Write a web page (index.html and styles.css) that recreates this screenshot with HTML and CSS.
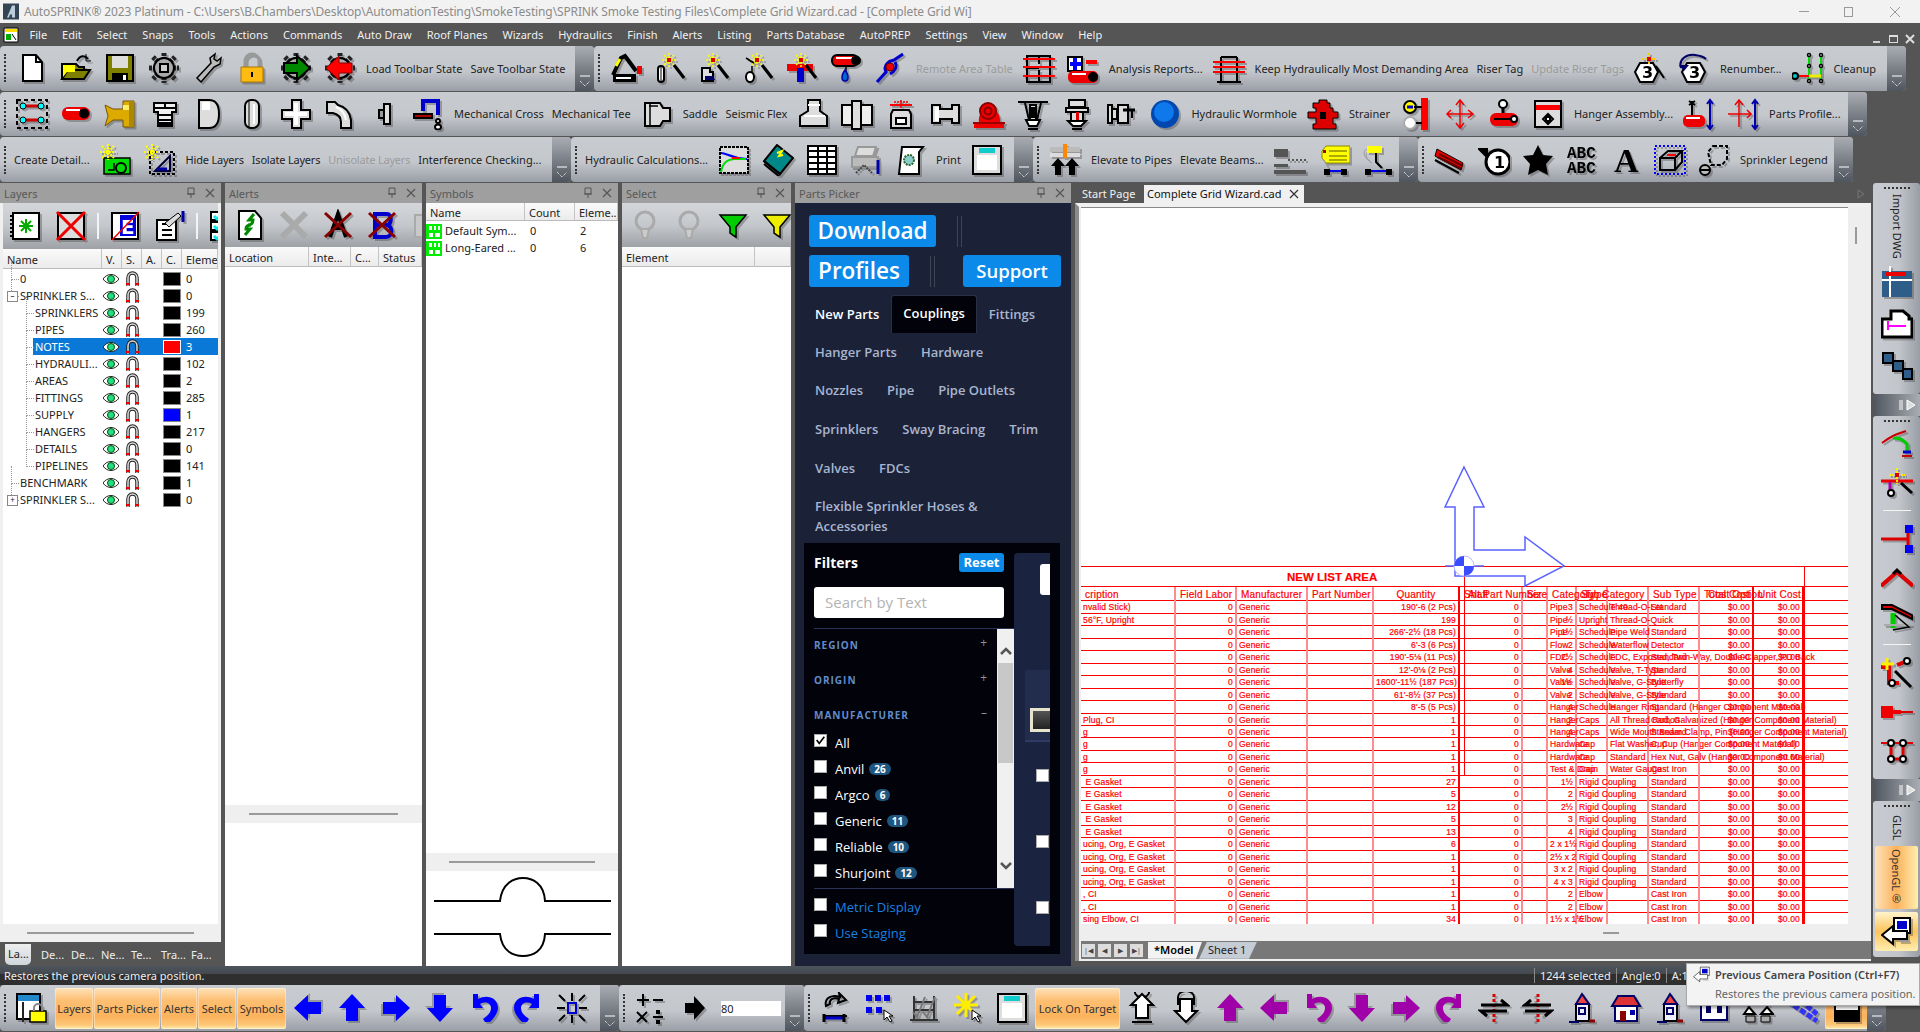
FILE: index.html
```html
<!doctype html>
<html lang="en">

<head>
  <meta charset="UTF-8">
  <title>AutoSPRINK 2023 Platinum</title>
  <link rel="stylesheet" href="styles.css">
</head>

<body>
  <svg class="sprite">
    <defs>
      <symbol id="doc" viewBox="0 0 32 32"><path d="M7 3h13l6 7v19H7z" fill="#fff"/><path d="M20 3v7h6"/></symbol>
      <symbol id="open" viewBox="0 0 32 32"><path d="M2 27V12h14l3 3h5v3H8L2 27h22l6-9H8" fill="#808000"/><path d="M3 13h12v7H7l-4 5z" fill="#ff0" stroke="none"/><path d="M17 9c3-6 8-6 11-2" /><path d="M26 2v7h5" stroke-width="1"/></symbol>
      <symbol id="save" viewBox="0 0 32 32"><path d="M3 3h26v26H3z" fill="#808000"/><path d="M8 4h16v12H8z" fill="#ddd" stroke="none"/><path d="M8 21h16v8H8z" fill="#000" stroke="none"/><path d="M19 23h3v5h-3z" fill="#fff" stroke="none"/></symbol>
      <symbol id="gear" viewBox="0 0 32 32"><path d="M16 1v30M1 16h30M5 5l22 22M27 5 5 27" stroke="#222" stroke-width="5" stroke-dasharray="3 1"/><circle cx="16" cy="16" r="10" fill="#aaa"/><path d="M12 12h8v8h-8z" fill="#ccc"/></symbol>
      <symbol id="wrench" viewBox="0 0 32 32"><path d="M5 26 19 11l-1-5 5-4-1 5 3 2 4-3-1 6-6 3L9 30z" fill="#bbb" stroke-width="1.5"/></symbol>
      <symbol id="lock" viewBox="0 0 32 32"><path d="M9 15V9a7 7 0 0 1 14 0v6" stroke="#999" stroke-width="3"/><path d="M5 15h22v15H5z" fill="#fb1" stroke="#a70" stroke-width="1"/><path d="M15 20h2v5h-2z" fill="#000" stroke="none"/></symbol>
      <symbol id="gearg" viewBox="0 0 32 32"><use href="#gear"/><path d="M4 11h13V4l13 12-13 12v-7H4z" fill="#080"/></symbol>
      <symbol id="gearr" viewBox="0 0 32 32"><use href="#gear"/><path d="M28 11H15V4L2 16l13 12v-7h13z" fill="#f00" stroke="#800" stroke-width="1"/></symbol>
      <symbol id="excav" viewBox="0 0 32 32"><path d="M3 23 11 6l4-2 11 15" stroke-width="4"/><path d="M3 22h23v8H3z" fill="#000" stroke="none"/><path d="M6 25h15v2H6z" fill="#fff" stroke="none"/><path d="M6 14l4-7" stroke="#ff0" stroke-width="3"/><path d="M27 14h5v8h-5z" fill="#e00" stroke="none"/></symbol>
      <symbol id="spark" viewBox="0 0 32 32"><path d="M15 1v14M8 8h14M10 3l10 10M20 3 10 13" stroke="#ff0" stroke-width="1.5" stroke-dasharray="2 1"/><path d="M13 6h4v4h-4z" fill="#d00" stroke="none"/><path d="M20 13 30 26" stroke-width="3"/></symbol>
      <symbol id="wcap" viewBox="0 0 32 32"><use href="#spark"/><rect x="4" y="14" width="6" height="16" rx="3" fill="#fff"/><path d="M7 15v14" stroke-width="1"/></symbol>
      <symbol id="wvalve" viewBox="0 0 32 32"><use href="#spark"/><path d="M4 16h8v4h3v9H4z" fill="#ddd"/><path d="M7 24h8l2 4H7z" fill="#006" stroke="none"/></symbol>
      <symbol id="whead" viewBox="0 0 32 32"><use href="#spark"/><path d="M4 6l8 5M10 14v6" stroke-width="1.5"/><ellipse cx="8" cy="25" rx="4" ry="5" fill="#fff"/></symbol>
      <symbol id="wtee" viewBox="0 0 32 32"><path d="M1 12h26v7H1z" fill="#e00" stroke="none"/><path d="M11 16h7v14h-7z" fill="#00c" stroke="none"/><use href="#spark"/></symbol>
      <symbol id="pipedrop" viewBox="0 0 32 32"><rect x="2" y="3" width="26" height="11" rx="5" fill="#e00"/><path d="M6 5h16v2H6z" fill="#fff" stroke="none"/><circle cx="26" cy="8.500" r="4" fill="#000"/><path d="M16 15v5" stroke-width="1.5"/><path d="M15 18c-5 7-3 11 0 11s5-4 0-11z" fill="#06c" stroke="#00a" stroke-width="1.5"/></symbol>
      <symbol id="bluehang" viewBox="0 0 32 32"><path d="M3 30 12 20c-3-6 2-11 8-12l9-6" stroke="#00c" stroke-width="3"/><path d="M21 10c3 5-1 10-5 12" stroke="#00c" stroke-width="3"/><circle cx="16" cy="15" r="4" fill="#e00" stroke="#600" stroke-width="1"/></symbol>
      <symbol id="redtable" viewBox="0 0 32 32"><path d="M4 4h23v26H4zM4 16h12M16 4v8M16 18v12" /><path d="M0 7h32M0 15h32M0 24h32" stroke="#f00" stroke-width="2"/></symbol>
      <symbol id="pluspipe" viewBox="0 0 32 32"><path d="M1 5h14v14H1z" fill="#fff"/><path d="M8 6v12M3 12h11" stroke="#00f" stroke-width="4"/><path d="M19 8h11v4H19z" fill="#f00" stroke="none"/><rect x="1" y="19" width="30" height="12" rx="5" fill="#e00" stroke="none"/><circle cx="26" cy="25" r="5" fill="#000" stroke="none"/><path d="M5 21h14v2H5z" fill="#fff" stroke="none"/></symbol>
      <symbol id="rack" viewBox="0 0 32 32"><path d="M8 5v24M24 5v24M4 30h24M8 5h16"/><path d="M0 10h32M0 15h32M0 20h32" stroke="#f00" stroke-width="2"/></symbol>
      <symbol id="wand3" viewBox="0 0 32 32"><path d="M6 11h13l5 9-5 10H6l-5-10z" fill="#fff"/><text x="8" y="26" class="num">3</text><path d="M15 1v12M8 7h14" stroke="#fc0" stroke-width="2" stroke-dasharray="2 1"/><path d="M13 5h4v4h-4z" fill="#d00" stroke="none"/><path d="M22 14 30 26" stroke-width="2"/></symbol>
      <symbol id="renum3" viewBox="0 0 32 32"><path d="M9 11h13l5 9-5 10H9l-5-10z" fill="#fff"/><text x="11" y="26" class="num">3</text><path d="M3 16C0 7 9 2 17 3s11 4 11 4" stroke="#006" stroke-width="2"/><path d="M1 13h10l-5 6z" fill="#006" stroke="none"/></symbol>
      <symbol id="clean" viewBox="0 0 32 32"><path d="M17 2v26M29 2v26" stroke="#0d0" stroke-width="2"/><path d="M3 24h14" stroke="#f00" stroke-width="2"/><path d="M17 24h12" stroke="#ee0" stroke-width="3"/><circle cx="3" cy="24" r="3" fill="#0cc"/><g fill="#fff" stroke-width="1.5"><circle cx="17" cy="3" r="1.500"/><circle cx="29" cy="3" r="1.500"/><circle cx="17" cy="14" r="1.500"/><circle cx="29" cy="14" r="1.500"/><circle cx="17" cy="29" r="1.500"/><circle cx="29" cy="29" r="1.500"/></g></symbol>
      <symbol id="area" viewBox="0 0 32 32"><path d="M1 2h30v28H1z" stroke-dasharray="4 3"/><path d="M6 8h20M6 22h20" stroke="#c00" stroke-width="3"/><circle cx="7" cy="8" r="3" fill="#0ff" stroke-width="1"/><circle cx="25" cy="8" r="3" fill="#0ff" stroke-width="1"/><circle cx="7" cy="22" r="3" fill="#0ff" stroke-width="1"/><circle cx="25" cy="22" r="3" fill="#0ff" stroke-width="1"/></symbol>
      <symbol id="pipe" viewBox="0 0 32 32"><rect x="2" y="9" width="28" height="13" rx="6" fill="#e00" stroke="none"/><circle cx="24" cy="15.500" r="5" fill="#000" stroke="none"/><path d="M6 11h14v2H6z" fill="#fff" stroke="none"/></symbol>
      <symbol id="yfit" viewBox="0 0 32 32"><path d="M1 7l8 4h10V3h11v26H19v-7H9l-8 6 3-10z" fill="#da0" stroke="#750" stroke-width="1"/><path d="M19 7h11v5H19z" fill="#fe6" stroke="none"/><path d="M25 3h5v26h-5z" fill="#a80" stroke="none"/></symbol>
      <symbol id="cap" viewBox="0 0 32 32"><path d="M6 5h22v9h-4v14H10V14H6z" fill="#eee"/><path d="M6 10h22M10 17h14M10 22h14M17 5v5" /><path d="M11 24h12v4H11z" fill="#000" stroke="none"/></symbol>
      <symbol id="endc" viewBox="0 0 32 32"><path d="M7 2h10c8 0 10 6 10 14s-2 14-10 14H7z" fill="#ddd"/><path d="M10 4h8v8h-8z" fill="#fff" stroke="none"/></symbol>
      <symbol id="disc" viewBox="0 0 32 32"><rect x="9" y="2" width="14" height="28" rx="6" fill="#ddd"/><path d="M13 3v26" stroke-width="1"/><path d="M18 6v20" stroke="#fff"/></symbol>
      <symbol id="cross" viewBox="0 0 32 32"><path d="M12 2h9v10h9v9H21v9h-9V21H2v-9h10z" fill="#ddd"/><path d="M14 5h4v22h-4zM5 14h22v4H5z" fill="#fff" stroke="none"/></symbol>
      <symbol id="elbow" viewBox="0 0 32 32"><path d="M3 4h8l3 3c8 2 12 8 13 15v8H17v-6c0-5-4-8-8-9H3z" fill="#ddd"/><path d="M12 9c5 2 9 6 10 13" stroke="#fff"/></symbol>
      <symbol id="flange" viewBox="0 0 32 32"><path d="M16 6h6v20h-6z" fill="#ddd"/><path d="M11 12h5v8h-5z" fill="#999"/></symbol>
      <symbol id="hang" viewBox="0 0 32 32"><path d="M11 13V3h15v14" stroke="#00c" stroke-width="4"/><path d="M2 16h18v4H2z" fill="#a00"/><circle cx="26" cy="23" r="2" fill="#fff"/><ellipse cx="26" cy="29" rx="3" ry="2.500" fill="#fff"/></symbol>
      <symbol id="reducer" viewBox="0 0 32 32"><path d="M4 5h15l3 5h7v13h-7l-3 5H4z" fill="#ddd"/><path d="M9 5v23M8 8h9" stroke-width="1.500"/></symbol>
      <symbol id="tee" viewBox="0 0 32 32"><path d="M11 2h12v11l7 5v10H3V18l8-5z" fill="#ddd"/><path d="M7 18h21M11 7h12" stroke="#fff"/></symbol>
      <symbol id="coupling" viewBox="0 0 32 32"><path d="M1 7h30v20H1z" fill="#eee"/><path d="M11 3h9v28h-9z" fill="#ddd"/></symbol>
      <symbol id="valve" viewBox="0 0 32 32"><path d="M5 7h22" stroke="#f00" stroke-width="2"/><path d="M16 2v8M9 4h14" stroke="#e00" stroke-width="1.500" stroke-dasharray="2 1"/><path d="M8 12h16l2 4v14H6V16z" fill="#ddd"/><path d="M11 20h10v6H11z" fill="#fff"/></symbol>
      <symbol id="spool" viewBox="0 0 32 32"><path d="M3 7h8v4h12V7h7v18h-7v-4H11v4H3z" fill="#ddd"/><path d="M6 9h4v14H6z" fill="#fff" stroke="none"/></symbol>
      <symbol id="pump" viewBox="0 0 32 32"><path d="M1 30v-5h5c-1-8 3-15 10-15s12 7 11 15h4v5z" fill="#e00" stroke="none"/><circle cx="15" cy="13" r="8" fill="#e00" stroke="#800"/><circle cx="15" cy="13" r="3.500" stroke="#800"/><path d="M0 25h32" stroke="#900"/></symbol>
      <symbol id="sprk" viewBox="0 0 32 32"><path d="M1 4h30" stroke-width="2"/><path d="M8 5l4 17M24 5l-4 17" stroke-width="2"/><rect x="13" y="7" width="6" height="15" fill="#ddd"/><path d="M15 10h2v9h-2z" fill="#d00"/><path d="M9 22h14l-3 6h-8z" fill="#fff"/><path d="M11 31h10" stroke-width="2"/></symbol>
      <symbol id="sprk2" viewBox="0 0 32 32"><path d="M8 2h16v7H8zM5 10h22v4H5z" fill="#ddd"/><path d="M10 14h12v9H10z" fill="#ddd"/><path d="M15 14h3v9h-3z" fill="#d00" stroke="none"/><path d="M7 23h18l-5 5h-8z" fill="#fff"/><path d="M11 31h10" /></symbol>
      <symbol id="sidev" viewBox="0 0 32 32"><path d="M3 7h4v18H3zM7 11h5v10H7z" fill="#ddd"/><path d="M13 7h10v18H13z" fill="#ddd"/><path d="M18 12h12" stroke-width="3"/><path d="M27 12v8" stroke-width="2"/></symbol>
      <symbol id="ball" viewBox="0 0 32 32"><circle cx="16" cy="16" r="14" fill="#0048b0" stroke="none"/><circle cx="15" cy="14" r="10" fill="#0f78ea" stroke="none"/></symbol>
      <symbol id="hydrant" viewBox="0 0 32 32"><path d="M12 2h8v3h3v5h3v4h5v6h-5v6h3v5H6v-5h3v-6H1v-6h8v-4H6V5h6z" fill="#d00" stroke-width="1"/><path d="M13 14h6v7h-6z" fill="#000" stroke="none"/></symbol>
      <symbol id="wall" viewBox="0 0 32 32"><path d="M21 0h7v32h-7z" fill="#f00" stroke="none"/><circle cx="10" cy="9" r="6" fill="#ff0"/><path d="M7 9h6" stroke="#00c" stroke-width="3"/><path d="M14 9h8" /><circle cx="10" cy="25" r="6" fill="#fff" stroke="#aaa"/><path d="M16 25h6" /></symbol>
      <symbol id="axes" viewBox="0 0 32 32"><path d="M16 3v26M3 16h26M12 7l4-5 4 5M24 12l5 4-5 4M12 25l4 5 4-5M7 12l-4 4 4 4" stroke="#e00" stroke-width="1.500"/></symbol>
      <symbol id="hpipe" viewBox="0 0 32 32"><ellipse cx="15" cy="6" rx="4" ry="4" fill="#fff"/><path d="M15 10v10" stroke-width="3"/><rect x="2" y="15" width="28" height="13" rx="6" fill="#e00" stroke="none"/><path d="M6 21h18" stroke="#000"/><circle cx="26" cy="21" r="3" fill="#fff"/></symbol>
      <symbol id="winbox" viewBox="0 0 32 32"><path d="M3 3h26v26H3z" fill="#ddd"/><path d="M4 7h24v5H4z" fill="#f00" stroke="none"/><path d="M16 16l5 5-5 5-5-5zM14 19h4v4h-4z" fill="#fff"/></symbol>
      <symbol id="hblue" viewBox="0 0 32 32"><path d="M9 3v16M6 3l6 4M12 3 6 7" stroke-width="2"/><rect x="0" y="17" width="22" height="12" rx="5" fill="#e00" stroke="none"/><path d="M3 19h14v2H3z" fill="#fff" stroke="none"/><path d="M27 3v28M24 6l3-4 3 4M24 27l3 4 3-4" stroke="#00a" stroke-width="2"/></symbol>
      <symbol id="axblue" viewBox="0 0 32 32"><path d="M12 3v26M1 16h23M8 7l4-5 4 5M20 12l4 4-4 4" stroke="#e00" stroke-width="1.500"/><path d="M28 3v28M25 6l3-4 3 4M25 27l3 4 3-4" stroke="#00a" stroke-width="2"/></symbol>
      <symbol id="adet1" viewBox="0 0 32 32"><path d="M4 14h26v16H4z" fill="#0d0" stroke-width="1.500"/><circle cx="21" cy="24" r="5"/><path d="M8 26h6v-7" stroke-width="1.500"/><use href="#star8"/></symbol>
      <symbol id="adet2" viewBox="0 0 32 32"><path d="M6 8h24v22H6z" stroke-dasharray="3 2"/><path d="M11 27h15V12z" stroke="#003" stroke-width="2"/><path d="M14 25h9" stroke="#00a" stroke-width="3"/><use href="#star8"/></symbol>
      <symbol id="star8" viewBox="0 0 32 32"><path d="M8 0v16M0 8h16M2 2l12 12M14 2 2 14" stroke="#ff0" stroke-width="2" stroke-dasharray="2 1"/></symbol>
      <symbol id="chart" viewBox="0 0 32 32"><path d="M2 3h28v26H2z" fill="#ddd" stroke-dasharray="3 1"/><path d="M3 9c6 0 9 5 26 6" stroke="#00f" stroke-width="2"/><path d="M3 28c2-10 6-12 13-13h12" stroke="#0d0" stroke-width="2"/><path d="M14 14h8" stroke="#f00"/></symbol>
      <symbol id="book" viewBox="0 0 32 32"><path d="M15 1 31 14 18 30 2 17z" fill="#088"/><path d="M2 17l16 13M2 20l16 13" /><path d="M15 9l5-2-3 5 4-1" stroke="#ff0" stroke-width="2"/></symbol>
      <symbol id="grid" viewBox="0 0 32 32"><path d="M2 2h28v28H2z" fill="#fff"/><path d="M2 7h28M2 13h28M2 19h28M2 25h28M12 2v28M21 2v28" stroke-width="2"/></symbol>
      <symbol id="printer" viewBox="0 0 32 32"><path d="M8 3h18l-3 9H5z" fill="#ddd" stroke="#999"/><path d="M2 13h26v10H2z" fill="#bbb" stroke="#999"/><path d="M6 29l8-8 8 8" stroke="#444" stroke-dasharray="2 1"/><path d="M28 16v14" stroke="#00a" stroke-width="3"/></symbol>
      <symbol id="page" viewBox="0 0 32 32"><path d="M8 3h21l-4 5v22H5z" fill="#fff"/><circle cx="15" cy="16" r="5" fill="#8cc" stroke="#363" stroke-width="2" stroke-dasharray="2 1"/></symbol>
      <symbol id="frame" viewBox="0 0 32 32"><path d="M2 2h28v28H2z" fill="#ddd"/><path d="M8 4h16v5H8z" fill="#1cc" stroke="none"/><path d="M6 11h20v15H6z" fill="#fff" stroke="none"/></symbol>
      <symbol id="elev" viewBox="0 0 32 32"><path d="M1 3h30v5H1z" fill="#bbb" stroke="none"/><path d="M1 9h30v4H1z" fill="#ddd" stroke="none"/><path d="M14 0h4v14h-4z" fill="#f80" stroke="none"/><path d="M9 14l7 8h-4v9H6v-9H2zM23 14l7 8h-4v9h-6v-9h-4z" fill="#000" stroke="none"/></symbol>
      <symbol id="stack" viewBox="0 0 32 32"><path d="M0 5h14v8H0zM0 26h32v4H0zM0 20h14v3H0z" fill="#555" stroke="none"/><path d="M14 16h18" stroke="#555" stroke-dasharray="2 2"/></symbol>
      <symbol id="tag" viewBox="0 0 32 32"><path d="M4 7l4-5h24v17H8l-4-5z" fill="#ff0" stroke="#880" stroke-width="1"/><path d="M11 7h18M11 12h18M11 16h18" stroke="#aa0"/><rect x="5" y="6" width="3" height="3" fill="#a00" stroke="none"/><path d="M5 15l6 10" stroke="#999" stroke-width="1"/><path d="M7 27h21" stroke="#00e" stroke-width="2"/><path d="M6 25h6v6H6zM23 25h6v6h-6z" fill="#000" stroke="none"/></symbol>
      <symbol id="tag2" viewBox="0 0 32 32"><path d="M5 2h15v7H5z" fill="#ff0" stroke="none"/><path d="M5 5C0 7 2 14 8 17" stroke="#999" stroke-width="1"/><path d="M14 9v9l6 6" stroke-width="2"/><path d="M7 27h21" stroke="#00e" stroke-width="2"/><path d="M3 25h6v6H3zM24 25h6v6h-6z" fill="#000" stroke="none"/></symbol>
      <symbol id="beam" viewBox="0 0 32 32"><path d="M3 5 29 19l-2 7L1 12z" fill="#e00" stroke-width="1"/><path d="M5 10l24 12M4 13l24 12" stroke="#600"/><path d="M1 16l24 13" stroke-width="2"/></symbol>
      <symbol id="clock" viewBox="0 0 32 32"><ellipse cx="20" cy="18" rx="12" ry="12" fill="#fff" stroke-width="3"/><text x="16" y="24" class="num">1</text><path d="M1 5h8v8zM4 8l6 6" fill="#000"/></symbol>
      <symbol id="star" viewBox="0 0 32 32"><path d="M16 1l5 10 10 1-7 8 2 11-10-5-10 5 2-11-7-8 10-1z" fill="#000" stroke="none"/></symbol>
      <symbol id="abc" viewBox="0 0 32 32"><text x="1" y="14" class="abc">ABC</text><text x="1" y="29" class="abc">ABC</text></symbol>
      <symbol id="biga" viewBox="0 0 32 32"><text x="4" y="28" class="biga">A</text></symbol>
      <symbol id="cube" viewBox="0 0 32 32"><path d="M1 2h30v28H1z" stroke="#00f" stroke-dasharray="2 2"/><path d="M6 14h15v12H6zM6 14l8-7h14l-7 7M21 26l7-8V7" /><path d="M13 11h9" stroke="#f00" stroke-width="2"/></symbol>
      <symbol id="lasso" viewBox="0 0 32 32"><path d="M15 2h14v13l-5 6H13L10 8z" stroke-dasharray="4 2"/><circle cx="7" cy="26" r="5" fill="#bbb"/><path d="M2 26h10"/></symbol>
      <symbol id="eye" viewBox="0 0 16 16"><path d="M0 8c4-6 12-6 16 0-4 6-12 6-16 0z" fill="#fff" stroke="#222" stroke-width="1"/><circle cx="8" cy="8" r="3.500" fill="#2d8" stroke="#050" stroke-width="1"/></symbol>
      <symbol id="magnet" viewBox="0 0 16 16"><path d="M4 15V7a4.500 5 0 0 1 9 0v8" fill="none" stroke="#222" stroke-width="3.500"/><path d="M4 15V7a4.500 5 0 0 1 9 0v8" fill="none" stroke="#ddd" stroke-width="1.500"/><path d="M2 13h4M11 13h4" stroke="#e00" stroke-width="2"/></symbol>
      <symbol id="symgrid" viewBox="0 0 16 16"><path d="M0 1h16v15H0z" fill="#0e0" stroke="none"/><path d="M3 3h3v4H3zM8 3h2v4H8zM12 3h2v4h-2zM3 10h4v4H3zM9 10h5v4H9z" fill="#fff" stroke="none"/></symbol>
      <symbol id="lnew" viewBox="0 0 32 32"><path d="M3 3h26v26H3z" fill="#fff"/><path d="M16 9v14M9 16h14M11 11l10 10M21 11 11 21" stroke="#0a0" stroke-width="2"/><path d="M1 5v22" stroke-dasharray="2 2"/></symbol>
      <symbol id="ldel" viewBox="0 0 32 32"><path d="M3 3h26v26H3z" fill="#ddd"/><path d="M2 2l28 28M30 2 2 30" stroke="#e00" stroke-width="3"/></symbol>
      <symbol id="lbook" viewBox="0 0 32 32"><path d="M3 3h26v26H3z" fill="#fff"/><path d="M11 5h16v21H11z" fill="#00d" stroke="none"/><text x="12" y="24" class="lbe">E</text><path d="M3 30 30 2" stroke="#e00" stroke-width="1.500"/></symbol>
      <symbol id="ledit" viewBox="0 0 32 32"><path d="M3 10h19v20H3z" fill="#fff"/><path d="M8 20h10M8 25h10M8 14h4" /><path d="M11 13 24 3l3 3-12 11z" fill="#ddd" stroke-width="1"/><path d="M29 1v11" stroke="#00a" stroke-width="3"/></symbol>
      <symbol id="lchk" viewBox="0 0 32 32"><path d="M3 2h12v8H3zM3 12h12v8H3zM3 22h12v8H3z" fill="#fff"/><path d="M6 6l3 3 8-8M6 16l3 3 8-8M6 26l3 3 8-8" stroke="#0ee" stroke-width="3"/></symbol>
      <symbol id="refresh" viewBox="0 0 32 32"><path d="M5 2h16l6 7v21H5z" fill="#fff"/><path d="M20 5l-5 6h4c0 3-2 5-5 5M11 26l5-6h-4c0-3 2-4 5-4" stroke="#080" stroke-width="3"/></symbol>
      <symbol id="xgrey" viewBox="0 0 32 32"><path d="M4 4l24 24M28 4 4 28" stroke="#aaa" stroke-width="6"/></symbol>
      <symbol id="xa" viewBox="0 0 32 32"><path d="M8 28 16 5l8 23M11 19h10" stroke-width="4"/><path d="M3 4l26 24M29 4 3 28" stroke="#800" stroke-width="3"/></symbol>
      <symbol id="xb" viewBox="0 0 32 32"><path d="M9 5h12c5 0 5 10 0 11 6 1 6 12-1 12H9zM9 16h12" stroke="#00c" stroke-width="4"/><path d="M3 4l26 24M29 4 3 28" stroke="#800" stroke-width="3"/></symbol>
      <symbol id="xdis" viewBox="0 0 32 32"><path d="M5 6h22v22H5z" fill="#c8c8c8" stroke="#aaa"/></symbol>
      <symbol id="sprgrey" viewBox="0 0 32 32"><circle cx="16" cy="12" r="9" fill="none" stroke="#aaa" stroke-width="3"/><path d="M12 20h8l-2 9h-4z" fill="#ccc" stroke="#aaa"/></symbol>
      <symbol id="funnel" viewBox="0 0 32 32"><path d="M3 6h26L19 18v10l-6-4v-6z" fill="currentColor" stroke-width="1.500"/></symbol>
      <symbol id="impt" viewBox="0 0 32 32"><path d="M1 5h30v26H1z" fill="#2e5d8a" stroke="none"/><path d="M1 14h30" stroke="#fff"/><path d="M9 0v31" stroke="#fff"/><path d="M5 6h20v4H5z" fill="#e00" stroke="none"/></symbol>
      <symbol id="pgpink" viewBox="0 0 32 32"><path d="M1 11h9V3h12l6 5v3h3v18H1z" fill="#fff" stroke-width="3"/><path d="M7 18h18" stroke="#f0f" stroke-width="2"/><path d="M7 13v9" stroke="#f0f" stroke-width="2"/></symbol>
      <symbol id="chain" viewBox="0 0 32 32"><path d="M2 3h10v10H2zM12 11h10v10H12zM22 19h9v10h-9z" fill="#2e5d8a"/></symbol>
      <symbol id="v1" viewBox="0 0 32 32"><path d="M1 15c8-6 12-8 24-12" stroke="#c00" stroke-width="2"/><path d="M12 10c6 0 8 0 14 6v8" stroke="#0c0" stroke-width="3"/><path d="M22 24h8" stroke="#00c" stroke-width="3"/><path d="M21 28h10" stroke="#c00" stroke-width="2"/></symbol>
      <symbol id="v2" viewBox="0 0 32 32"><path d="M0 14h32" stroke="#e00" stroke-width="3"/><path d="M9 15v9" stroke="#a0a" stroke-width="3"/><circle cx="10" cy="26" r="3" fill="#fff"/><path d="M16 1v16M8 8h16" stroke="#fe0" stroke-width="2" stroke-dasharray="2 1"/><path d="M14 6h4v4h-4z" fill="#d00" stroke="none"/><path d="M20 16l11 10" stroke-width="3"/></symbol>
      <symbol id="v3" viewBox="0 0 32 32"><path d="M0 16h28" stroke="#d00" stroke-width="3"/><path d="M27 6v20" stroke="#d00" stroke-width="3"/><path d="M24 2h8v8h-8zM24 22h8v8h-8z" fill="#00e" stroke="none"/></symbol>
      <symbol id="v4" viewBox="0 0 32 32"><path d="M0 24 16 10l16 14" stroke="#d00" stroke-width="4"/><path d="M12 12l4-4 4 4" stroke-width="3"/></symbol>
      <symbol id="v5" viewBox="0 0 32 32"><path d="M1 4h10l20 10v4L11 8H1z" fill="#d00"/><path d="M12 12v15" stroke="#0c0" stroke-width="5"/><path d="M3 24h28" stroke="#aaa" stroke-width="2"/><path d="M14 14l14 12-16 3" stroke-width="1.500"/></symbol>
      <symbol id="v6" viewBox="0 0 32 32"><path d="M0 10h8v16h10" stroke="#d00" stroke-width="4"/><path d="M16 8l10-4" stroke="#d00" stroke-width="4"/><path d="M6 1v12M1 7h12" stroke="#fe0" stroke-width="3"/><circle cx="26" cy="4" r="3" fill="#fff"/><circle cx="11" cy="26" r="3" fill="#fff"/><path d="M14 14l16 16" stroke-width="3"/></symbol>
      <symbol id="v7" viewBox="0 0 32 32"><path d="M0 10h12v12H0z" fill="#e00" stroke="none"/><path d="M12 14h8v4h-8z" fill="#e00" stroke="none"/><path d="M20 16h12" stroke="#d00" stroke-width="2"/></symbol>
      <symbol id="v8" viewBox="0 0 32 32"><path d="M0 8h32" stroke="#d00" stroke-width="2"/><path d="M10 10v14h12V10" stroke="#d00" stroke-width="3"/><g fill="#fff"><circle cx="10" cy="8" r="3"/><circle cx="22" cy="8" r="3"/><circle cx="10" cy="24" r="3"/><circle cx="22" cy="24" r="3"/></g></symbol>
      <symbol id="back" viewBox="0 0 32 32"><path d="M13 2h16v15H13z" fill="#fff"/><path d="M16 5h10v8H16z" fill="#00c" stroke="none"/><path d="M12 10 1 19l11 9v-5h14v-8H12z" fill="#fff"/><path d="M18 25h10" stroke="#999"/></symbol>
      <symbol id="winlk" viewBox="0 0 32 32"><path d="M1 2h23v25H1z" fill="#fff"/><path d="M2 3h21v6H2z" fill="#28c" stroke="none"/><path d="M7 10v20" stroke="#222"/><path d="M14 19h16v11H14z" fill="#ff0" stroke-width="1.500"/><path d="M18 19v-3a4 4 0 0 1 8 0v3" stroke="#888"/></symbol>
      <symbol id="arrow" viewBox="0 0 32 32"><path d="M16 2l13 14h-7v13H10V16H3z" fill="currentColor" stroke="none"/></symbol>
      <symbol id="undo" viewBox="0 0 32 32"><path d="M5 2h5v5c8-5 20-2 20 9 0 5-4 10-8 14h-5l-2-3c4-3 8-6 8-11 0-5-6-7-11-4l3 4H5z" fill="currentColor" stroke="none"/></symbol>
      <symbol id="fit" viewBox="0 0 32 32"><path d="M12 11h8v10h-8z" stroke="#00c" stroke-width="2"/><path d="M16 1v8M16 23v8M1 16h8M23 16h8M3 3l6 6M29 3l-6 6M3 29l6-6M29 29l-6-6" stroke-width="2"/></symbol>
      <symbol id="math" viewBox="0 0 32 32"><path d="M8 2v12M2 8h12M18 8h10M2 20l10 10M12 20 2 30M18 25h10" stroke-width="2"/><path d="M22 19h2v2h-2zM22 29h2v2h-2z" fill="#000"/></symbol>
      <symbol id="bigarrow" viewBox="0 0 32 32"><path d="M7 11h9V4l11 12-11 12v-7H7z" fill="#000" stroke="none"/></symbol>
      <symbol id="cam" viewBox="0 0 32 32"><path d="M6 14C4 6 12 2 20 5l-1-4 7 7-8 3 1-4c-5-2-10 0-9 5zM3 24h24" /><path d="M4 26h20" stroke="#00c" stroke-width="3"/><path d="M4 22v8M24 22v8" stroke-width="3"/></symbol>
      <symbol id="dots" viewBox="0 0 32 32"><path d="M2 3h6v6H2zM11 3h6v6h-6zM20 3h6v6h-6zM2 15h6v6H2zM12 15h6v6h-6z" fill="#00e" stroke="none"/><path d="M20 18v10l3-3 3 5 2-1-3-5h4z" fill="#fff" stroke-width="1"/></symbol>
      <symbol id="checks" viewBox="0 0 32 32"><path d="M6 4v24M26 4v24M2 28h28M6 10h20M6 18h20" stroke="#333"/><path d="M5 20l4 5 8-20M15 20l4 5 8-20" stroke="#777" stroke-width="2"/></symbol>
      <symbol id="ystar" viewBox="0 0 32 32"><path d="M14 1v24M2 13h24M5 4l18 18M23 4 5 22" stroke="#fe0" stroke-width="3"/><path d="M20 18v10l3-3 3 5 2-1-3-5h4z" fill="#fff" stroke-width="1"/></symbol>
      <symbol id="goup" viewBox="0 0 32 32"><path d="M16 2 27 13h-5v13H10V13H5zM6 30h20" fill="#fff" stroke-width="2"/><path d="M14 5a7 5 0 1 1 4 0" stroke-width="2"/></symbol>
      <symbol id="godn" viewBox="0 0 32 32"><path d="M16 30 27 19h-5V7H10v12H5z" fill="#fff" stroke-width="2"/><path d="M8 5a8 6 0 0 1 16 0v8M8 5v8" stroke-width="2"/></symbol>
      <symbol id="spin" viewBox="0 0 32 32"><path d="M16 2v28" stroke="#d00" stroke-width="3" stroke-dasharray="3 2"/><path d="M3 13h26l-6-5M29 19H3l6 5" stroke-width="3"/></symbol>
      <symbol id="house" viewBox="0 0 32 32"><path d="M10 12h13v17H10z" fill="#eef"/><path d="M16 2l7 10H10z" fill="#e44" stroke="#006"/><path d="M13 16h6v6h-6zM3 30h10" stroke="#006"/><path d="M23 29h6" stroke="#800" stroke-width="3"/></symbol>
      <symbol id="barn" viewBox="0 0 32 32"><path d="M5 14h22v15H5z" fill="#fff" stroke="#006"/><path d="M2 14 8 4h16l6 10z" fill="#d33" stroke="#006"/><path d="M10 19h6v10h-6z" fill="#800" stroke="none"/><path d="M20 18h5v5h-5z" fill="#00a" stroke="none"/></symbol>
      <symbol id="panel2" viewBox="0 0 32 32"><path d="M3 9h26v19H3z" fill="#fff" stroke="#006"/><path d="M8 14h5v7H8zM19 14h5v7h-5z" fill="#006" stroke="none"/></symbol>
      <symbol id="twin" viewBox="0 0 32 32"><path d="M11 3 5 14M21 3l6 11M2 22l5-7 6 7zM19 22l6-7 6 7z" fill="#fff" stroke-width="2"/><path d="M4 24h9v6H4zM19 24h9v6h-9z" fill="#aaa" stroke-width="1"/></symbol>
      <symbol id="bars" viewBox="0 0 32 32"><path d="M1 9 31 29M8 4l23 18" stroke="#33f" stroke-width="5" stroke-dasharray="6 2"/></symbol>
      <symbol id="disk2" viewBox="0 0 32 32"><path d="M4 3h24v26H4z" fill="#fff"/><path d="M10 3h4v9h-4zM18 3h4v9h-4zM4 18h24v11H4z" fill="#000" stroke="none"/></symbol>
      <symbol id="chev" viewBox="0 0 14 14"><path d="M2 2h10" stroke="#fff" fill="none"/><path d="M2 7l5 5 5-5" stroke="#fff" fill="none" stroke-dasharray="1 1"/></symbol>
      <symbol id="chevside" viewBox="0 0 20 12"><path d="M2 1v10M4 1v10" stroke="#fff" fill="none"/><path d="M9 1v10l8-5z" fill="#ddd" stroke="#fff"/></symbol>
      <symbol id="pin" viewBox="0 0 10 12"><path d="M2 1h6v6H2zM1 7h8M5 7v4" fill="none" stroke="#555"/></symbol>
      <symbol id="closex" viewBox="0 0 10 10"><path d="M1 1l8 8M9 1 1 9" fill="none" stroke="#555" stroke-width="1.200"/></symbol>
    </defs>
  </svg>

  <header class="titlebar">
    <svg class="appicon" viewBox="0 0 16 16"><path d="M0 0h16v16H0z" fill="#345"/><path d="M4 14 9 2h3v12H9v-3H7l-1 3z" fill="#bcd"/></svg>
    <span class="apptitle">AutoSPRINK® 2023 Platinum - C:\Users\B.Chambers\Desktop\AutomationTesting\SmokeTesting\SPRINK Smoke Testing Files\Complete Grid Wizard.cad - [Complete Grid Wi]</span>
    <div class="winbtns">
      <span class="wdash"></span>
      <span class="wrest"></span>
      <svg class="wclose" viewBox="0 0 10 10"><path d="M0 0l10 10M10 0 0 10" stroke="#999"/></svg>
    </div>
  </header>

  <nav class="menubar">
    <svg class="docicon" viewBox="0 0 16 16"><path d="M1 1h14v14H1z" fill="#fff" stroke="#000"/><path d="M2 2h12v3H2z" fill="#fd0"/><path d="M3 7h5v6H3z" fill="#0a0"/><path d="M9 7l4 6" stroke="#000"/></svg>
    <a>File</a><a>Edit</a><a>Select</a><a>Snaps</a><a>Tools</a><a>Actions</a><a>Commands</a><a>Auto Draw</a><a>Roof Planes</a><a>Wizards</a><a>Hydraulics</a><a>Finish</a><a>Alerts</a><a>Listing</a><a>Parts Database</a><a>AutoPREP</a><a>Settings</a><a>View</a><a>Window</a><a>Help</a>
    <div class="mdi">
      <span class="mdash"></span>
      <span class="mrest"></span>
      <svg class="mclose" viewBox="0 0 10 10"><path d="M1 1l8 8M9 1 1 9" stroke="#ddd" stroke-width="2"/></svg>
    </div>
  </nav>

  <div class="tbrow">
    <div class="tb w594">
      <i class="grip"></i>
      <b class="btn"><svg class="ico"><use href="#doc"/></svg></b>
      <b class="btn"><svg class="ico"><use href="#open"/></svg></b>
      <b class="btn"><svg class="ico"><use href="#save"/></svg></b>
      <b class="btn"><svg class="ico"><use href="#gear"/></svg></b>
      <b class="btn"><svg class="ico"><use href="#wrench"/></svg></b>
      <b class="btn"><svg class="ico"><use href="#lock"/></svg></b>
      <b class="btn"><svg class="ico"><use href="#gearg"/></svg></b>
      <b class="btn"><svg class="ico"><use href="#gearr"/></svg></b>
      <span class="lbl">Load Toolbar State</span>
      <span class="lbl">Save Toolbar State</span>
      <span class="chev"><svg><use href="#chev"/></svg></span>
    </div>
    <div class="tb w1312">
      <i class="grip"></i>
      <b class="btn"><svg class="ico"><use href="#excav"/></svg></b>
      <b class="btn"><svg class="ico"><use href="#wcap"/></svg></b>
      <b class="btn"><svg class="ico"><use href="#wvalve"/></svg></b>
      <b class="btn"><svg class="ico"><use href="#whead"/></svg></b>
      <b class="btn"><svg class="ico"><use href="#wtee"/></svg></b>
      <b class="btn"><svg class="ico"><use href="#pipedrop"/></svg></b>
      <b class="btn"><svg class="ico"><use href="#bluehang"/></svg></b>
      <span class="lbl dis">Remote Area Table</span>
      <b class="btn"><svg class="ico"><use href="#redtable"/></svg></b>
      <b class="btn"><svg class="ico"><use href="#pluspipe"/></svg></b>
      <span class="lbl">Analysis Reports...</span>
      <b class="btn"><svg class="ico"><use href="#rack"/></svg></b>
      <span class="lbl">Keep Hydraulically Most Demanding Area</span>
      <span class="lbl">Riser Tag</span>
      <span class="lbl dis">Update Riser Tags</span>
      <b class="btn"><svg class="ico"><use href="#wand3"/></svg></b>
      <b class="btn"><svg class="ico"><use href="#renum3"/></svg></b>
      <span class="lbl">Renumber...</span>
      <b class="btn"><svg class="ico"><use href="#clean"/></svg></b>
      <span class="lbl">Cleanup</span>
      <span class="chev"><svg><use href="#chev"/></svg></span>
    </div>
  </div>

  <div class="tbrow">
    <div class="tb w1867">
      <i class="grip"></i>
      <b class="btn"><svg class="ico"><use href="#area"/></svg></b>
      <b class="btn"><svg class="ico"><use href="#pipe"/></svg></b>
      <b class="btn"><svg class="ico"><use href="#yfit"/></svg></b>
      <b class="btn"><svg class="ico"><use href="#cap"/></svg></b>
      <b class="btn"><svg class="ico"><use href="#endc"/></svg></b>
      <b class="btn"><svg class="ico"><use href="#disc"/></svg></b>
      <b class="btn"><svg class="ico"><use href="#cross"/></svg></b>
      <b class="btn"><svg class="ico"><use href="#elbow"/></svg></b>
      <b class="btn"><svg class="ico"><use href="#flange"/></svg></b>
      <b class="btn"><svg class="ico"><use href="#hang"/></svg></b>
      <span class="lbl">Mechanical Cross</span>
      <span class="lbl">Mechanical Tee</span>
      <b class="btn"><svg class="ico"><use href="#reducer"/></svg></b>
      <span class="lbl">Saddle</span>
      <span class="lbl">Seismic Flex</span>
      <b class="btn"><svg class="ico"><use href="#tee"/></svg></b>
      <b class="btn"><svg class="ico"><use href="#coupling"/></svg></b>
      <b class="btn"><svg class="ico"><use href="#valve"/></svg></b>
      <b class="btn"><svg class="ico"><use href="#spool"/></svg></b>
      <b class="btn"><svg class="ico"><use href="#pump"/></svg></b>
      <b class="btn"><svg class="ico"><use href="#sprk"/></svg></b>
      <b class="btn"><svg class="ico"><use href="#sprk2"/></svg></b>
      <b class="btn"><svg class="ico"><use href="#sidev"/></svg></b>
      <b class="btn"><svg class="ico"><use href="#ball"/></svg></b>
      <span class="lbl">Hydraulic Wormhole</span>
      <b class="btn"><svg class="ico"><use href="#hydrant"/></svg></b>
      <span class="lbl">Strainer</span>
      <b class="btn"><svg class="ico"><use href="#wall"/></svg></b>
      <b class="btn"><svg class="ico"><use href="#axes"/></svg></b>
      <b class="btn"><svg class="ico"><use href="#hpipe"/></svg></b>
      <b class="btn"><svg class="ico"><use href="#winbox"/></svg></b>
      <span class="lbl">Hanger Assembly...</span>
      <b class="btn"><svg class="ico"><use href="#hblue"/></svg></b>
      <b class="btn"><svg class="ico"><use href="#axblue"/></svg></b>
      <span class="lbl">Parts Profile...</span>
      <span class="chev"><svg><use href="#chev"/></svg></span>
    </div>
  </div>

  <div class="tbrow">
    <div class="tb w571">
      <i class="grip"></i>
      <span class="lbl">Create Detail...</span>
      <b class="btn"><svg class="ico"><use href="#adet1"/></svg></b>
      <b class="btn"><svg class="ico"><use href="#adet2"/></svg></b>
      <span class="lbl snug">Hide Layers</span>
      <span class="lbl snug">Isolate Layers</span>
      <span class="lbl snug dis">Unisolate Layers</span>
      <span class="lbl">Interference Checking...</span>
      <span class="chev"><svg><use href="#chev"/></svg></span>
    </div>
    <div class="tb w462">
      <i class="grip"></i>
      <span class="lbl">Hydraulic Calculations...</span>
      <b class="btn"><svg class="ico"><use href="#chart"/></svg></b>
      <b class="btn"><svg class="ico"><use href="#book"/></svg></b>
      <b class="btn"><svg class="ico"><use href="#grid"/></svg></b>
      <b class="btn"><svg class="ico"><use href="#printer"/></svg></b>
      <b class="btn"><svg class="ico"><use href="#page"/></svg></b>
      <span class="lbl">Print</span>
      <b class="btn"><svg class="ico"><use href="#frame"/></svg></b>
      <span class="chev"><svg><use href="#chev"/></svg></span>
    </div>
    <div class="tb w385">
      <i class="grip"></i>
      <b class="btn"><svg class="ico"><use href="#elev"/></svg></b>
      <span class="lbl">Elevate to Pipes</span>
      <span class="lbl">Elevate Beams...</span>
      <b class="btn"><svg class="ico"><use href="#stack"/></svg></b>
      <b class="btn"><svg class="ico"><use href="#tag"/></svg></b>
      <b class="btn"><svg class="ico"><use href="#tag2"/></svg></b>
      <span class="chev"><svg><use href="#chev"/></svg></span>
    </div>
    <div class="tb w435">
      <i class="grip"></i>
      <b class="btn"><svg class="ico"><use href="#beam"/></svg></b>
      <b class="btn"><svg class="ico"><use href="#clock"/></svg></b>
      <b class="btn"><svg class="ico"><use href="#star"/></svg></b>
      <b class="btn"><svg class="ico"><use href="#abc"/></svg></b>
      <b class="btn"><svg class="ico"><use href="#biga"/></svg></b>
      <b class="btn"><svg class="ico"><use href="#cube"/></svg></b>
      <b class="btn"><svg class="ico"><use href="#lasso"/></svg></b>
      <span class="lbl">Sprinkler Legend</span>
      <span class="chev"><svg><use href="#chev"/></svg></span>
    </div>
  </div>

  <main class="workspace">
    <section class="panel layers">
      <div class="ptitle"><span>Layers</span><svg class="pin"><use href="#pin"/></svg><svg class="pclose"><use href="#closex"/></svg></div>
      <div class="ptools layertools">
        <svg class="ico"><use href="#lnew"/></svg>
        <svg class="ico"><use href="#ldel"/></svg>
        <i class="tsep"></i>
        <svg class="ico"><use href="#lbook"/></svg>
        <svg class="ico"><use href="#ledit"/></svg>
        <i class="tsep"></i>
        <svg class="ico"><use href="#lchk"/></svg>
      </div>
      <div class="thead lcols"><span>Name</span><span>V.</span><span>S.</span><span>A.</span><span>C.</span><span>Eleme</span></div>
      <div class="tree">
        <div class="lrow lcols l1"><span>0</span><svg class="s16"><use href="#eye"/></svg><svg class="s16"><use href="#magnet"/></svg><i></i><i class="sw"></i><span>0</span></div>
        <div class="lrow lcols l1 open"><span>SPRINKLER S...</span><svg class="s16"><use href="#eye"/></svg><svg class="s16"><use href="#magnet"/></svg><i></i><i class="sw"></i><span>0</span></div>
        <div class="lrow lcols l2"><span>SPRINKLERS</span><svg class="s16"><use href="#eye"/></svg><svg class="s16"><use href="#magnet"/></svg><i></i><i class="sw"></i><span>199</span></div>
        <div class="lrow lcols l2"><span>PIPES</span><svg class="s16"><use href="#eye"/></svg><svg class="s16"><use href="#magnet"/></svg><i></i><i class="sw"></i><span>260</span></div>
        <div class="lrow lcols l2 sel"><span>NOTES</span><svg class="s16"><use href="#eye"/></svg><svg class="s16"><use href="#magnet"/></svg><i></i><i class="sw red"></i><span>3</span></div>
        <div class="lrow lcols l2"><span>HYDRAULI...</span><svg class="s16"><use href="#eye"/></svg><svg class="s16"><use href="#magnet"/></svg><i></i><i class="sw"></i><span>102</span></div>
        <div class="lrow lcols l2"><span>AREAS</span><svg class="s16"><use href="#eye"/></svg><svg class="s16"><use href="#magnet"/></svg><i></i><i class="sw"></i><span>2</span></div>
        <div class="lrow lcols l2"><span>FITTINGS</span><svg class="s16"><use href="#eye"/></svg><svg class="s16"><use href="#magnet"/></svg><i></i><i class="sw"></i><span>285</span></div>
        <div class="lrow lcols l2"><span>SUPPLY</span><svg class="s16"><use href="#eye"/></svg><svg class="s16"><use href="#magnet"/></svg><i></i><i class="sw blue"></i><span>1</span></div>
        <div class="lrow lcols l2"><span>HANGERS</span><svg class="s16"><use href="#eye"/></svg><svg class="s16"><use href="#magnet"/></svg><i></i><i class="sw"></i><span>217</span></div>
        <div class="lrow lcols l2"><span>DETAILS</span><svg class="s16"><use href="#eye"/></svg><svg class="s16"><use href="#magnet"/></svg><i></i><i class="sw"></i><span>0</span></div>
        <div class="lrow lcols l2 last"><span>PIPELINES</span><svg class="s16"><use href="#eye"/></svg><svg class="s16"><use href="#magnet"/></svg><i></i><i class="sw"></i><span>141</span></div>
        <div class="lrow lcols l1"><span>BENCHMARK</span><svg class="s16"><use href="#eye"/></svg><svg class="s16"><use href="#magnet"/></svg><i></i><i class="sw"></i><span>1</span></div>
        <div class="lrow lcols l1 closed"><span>SPRINKLER S...</span><svg class="s16"><use href="#eye"/></svg><svg class="s16"><use href="#magnet"/></svg><i></i><i class="sw"></i><span>0</span></div>
      </div>
      <div class="hbar"><i></i></div>
      <div class="ltabs"><span class="on">La...</span><span>De...</span><span>De...</span><span>Ne...</span><span>Te...</span><span>Tra...</span><span>Fa...</span></div>
    </section>

    <section class="panel alerts">
      <div class="ptitle"><span>Alerts</span><svg class="pin"><use href="#pin"/></svg><svg class="pclose"><use href="#closex"/></svg></div>
      <div class="ptools alerttools">
        <svg class="ico"><use href="#refresh"/></svg>
        <svg class="ico plain"><use href="#xgrey"/></svg>
        <svg class="ico"><use href="#xa"/></svg>
        <svg class="ico"><use href="#xb"/></svg>
        <svg class="ico plain"><use href="#xdis"/></svg>
      </div>
      <div class="thead acols"><span>Location</span><span>Inte...</span><span>C...</span><span>Status</span></div>
      <div class="whitefill"></div>
      <div class="hbar"><i></i></div>
      <div class="whitefoot"></div>
    </section>

    <section class="panel symbols">
      <div class="ptitle"><span>Symbols</span><svg class="pin"><use href="#pin"/></svg><svg class="pclose"><use href="#closex"/></svg></div>
      <div class="thead scols"><span>Name</span><span>Count</span><span>Eleme...</span></div>
      <div class="whitefill symlist">
        <div class="srow scols"><span><svg class="s16"><use href="#symgrid"/></svg>Default Sym...</span><span>0</span><span>2</span></div>
        <div class="srow scols"><span><svg class="s16"><use href="#symgrid"/></svg>Long-Eared ...</span><span>0</span><span>6</span></div>
      </div>
      <div class="hbar"><i></i></div>
      <svg class="preview" viewBox="0 0 192 95"><path d="M8 30H74C76 12 88 7 97 7S118 12 119 30H185M8 63H74C76 81 88 85 97 85S118 81 119 63H185"/></svg>
    </section>

    <section class="panel select">
      <div class="ptitle"><span>Select</span><svg class="pin"><use href="#pin"/></svg><svg class="pclose"><use href="#closex"/></svg></div>
      <div class="ptools selecttools">
        <svg class="ico plain"><use href="#sprgrey"/></svg>
        <svg class="ico plain"><use href="#sprgrey"/></svg>
        <svg class="ico green"><use href="#funnel"/></svg>
        <svg class="ico yellow"><use href="#funnel"/></svg>
      </div>
      <div class="thead ecols"><span>Element</span><span></span></div>
      <div class="whitefill"></div>
    </section>

    <section class="panel parts">
      <div class="ptitle"><span>Parts Picker</span><svg class="pin"><use href="#pin"/></svg><svg class="pclose"><use href="#closex"/></svg></div>
      <div class="partsbody">
        <div class="prow">
          <a class="pbtn dl">Download</a><i class="dsep s1"></i>
        </div>
        <div class="prow">
          <a class="pbtn pf">Profiles</a><i class="dsep s2"></i><a class="pbtn sp">Support</a>
        </div>
        <div class="pnav">
          <a class="new r1">New Parts</a><a class="on">Couplings</a><a class="r1">Fittings</a>
          <a class="r1">Hanger Parts</a><a class="r1">Hardware</a>
          <a>Nozzles</a><a>Pipe</a><a>Pipe Outlets</a>
          <a>Sprinklers</a><a>Sway Bracing</a><a>Trim</a>
          <a>Valves</a><a>FDCs</a>
          <a class="wide">Flexible Sprinkler Hoses &amp;<br>Accessories</a>
        </div>
        <div class="filterbox">
          <div class="fcol">
            <div class="fhead"><strong>Filters</strong><a class="reset">Reset</a></div>
            <div class="fsearch">Search by Text</div>
            <div class="fscroll">
              <div class="flist">
                <div class="fsec"><span>REGION</span><em>+</em></div>
                <div class="fsec"><span>ORIGIN</span><em>+</em></div>
                <div class="fsec mfr"><span>MANUFACTURER</span><em>–</em></div>
                <label class="fchk"><i class="cb on"><svg viewBox="0 0 13 13"><path d="M2 6l3 4 6-8" fill="none" stroke="#000" stroke-width="2"/></svg></i>All</label>
                <label class="fchk"><i class="cb"></i>Anvil<u>26</u></label>
                <label class="fchk"><i class="cb"></i>Argco<u>6</u></label>
                <label class="fchk"><i class="cb"></i>Generic<u>11</u></label>
                <label class="fchk"><i class="cb"></i>Reliable<u>10</u></label>
                <label class="fchk"><i class="cb"></i>Shurjoint<u>12</u></label>
              </div>
              <div class="fbar">
                <svg viewBox="0 0 14 10"><path d="M2 8l5-5 5 5" fill="none" stroke="#555" stroke-width="2.500"/></svg>
                <i></i>
                <svg class="down" viewBox="0 0 14 10"><path d="M2 2l5 5 5-5" fill="none" stroke="#555" stroke-width="2.500"/></svg>
              </div>
            </div>
            <label class="fchk link"><i class="cb"></i>Metric Display</label>
            <label class="fchk link"><i class="cb"></i>Use Staging</label>
          </div>
          <div class="fside">
            <i class="sbox"></i>
            <div class="sband"><i></i></div>
            <i class="cb scb"></i>
            <i class="cb scb far"></i>
            <i class="cb scb far"></i>
          </div>
        </div>
      </div>
    </section>

    <section class="docwrap">
      <div class="doctabs">
        <span class="dtab">Start Page</span>
        <span class="dtab on">Complete Grid Wizard.cad<svg viewBox="0 0 10 10"><path d="M1 1l8 8M9 1 1 9" fill="none" stroke="#333" stroke-width="1.200"/></svg></span>
        <svg class="docplay" viewBox="0 0 10 10"><path d="M2 1v8l6-4z" fill="none" stroke="#777"/></svg>
      </div>
      <div class="docbody">
        <div class="docmain">
          <div class="canvas">
            <svg class="axis" viewBox="1081 208 767 717">
              <path d="M1464 468 1484 508H1474V551H1525V538L1564 567 1525 587V577H1455V508H1445Z" class="axline"/>
              <path d="M1445 567H1484" class="axline"/>
              <circle cx="1464" cy="567" r="10" fill="#fff" stroke="#bbf"/>
              <path d="M1464 567V557A10 10 0 0 0 1454 567ZM1464 567V577A10 10 0 0 0 1474 567Z" fill="#3a4cff"/>
            </svg>
            <div class="sheet">
              <div class="stitle">NEW LIST AREA</div>
              <div class="tr th"><i>cription</i><i>Field Labor</i><i>Manufacturer</i><i>Part Number</i><i>Quantity</i><i>Shaft<em class="ovl">Alt.Part Number</em></i><i>Size</i><i>Category</i><i>Sub Category<em class="ovl">Type</em></i><i></i><i>Sub Type</i><i>Total Cost<em class="ovl">Cost Option</em></i><i>Unit Cost</i><i></i></div>
              <div class="tr"><i>nvalid Stick)</i><i>0</i><i>Generic</i><i></i><i>190'-6 (2 Pcs)</i><i>0</i><i></i><i>Pipe<em>3</em></i><i>Schedule 40</i><i>Thread-O-Let</i><i>Standard</i><i>$0.00</i><i>$0.00</i><i></i></div>
              <div class="tr"><i>56°F, Upright</i><i>0</i><i>Generic</i><i></i><i>199</i><i>0</i><i></i><i>Pipe<em>½</em></i><i>Upright</i><i>Thread-O-Quick</i><i></i><i>$0.00</i><i>$0.00</i><i></i></div>
              <div class="tr"><i></i><i>0</i><i>Generic</i><i></i><i>266'-2½ (18 Pcs)</i><i>0</i><i></i><i>Pipe<em>1½</em></i><i>Schedule</i><i>Pipe Weld</i><i>Standard</i><i>$0.00</i><i>$0.00</i><i></i></div>
              <div class="tr"><i></i><i>0</i><i>Generic</i><i></i><i>6'-3 (6 Pcs)</i><i>0</i><i></i><i>Flow<em>2</em></i><i>Schedule</i><i>Waterflow</i><i>Detector</i><i>$0.00</i><i>$0.00</i><i></i></div>
              <div class="tr"><i></i><i>0</i><i>Generic</i><i></i><i>190'-5⅛ (11 Pcs)</i><i>0</i><i></i><i>FDC<em>2½</em></i><i>Schedule</i><i>FDC, Exposed, Twin-Way, Double-Clapper, PD Back</i><i>Standard</i><i>$0.00</i><i>$0.00</i><i></i></div>
              <div class="tr"><i></i><i>0</i><i>Generic</i><i></i><i>12'-0⅛ (2 Pcs)</i><i>0</i><i></i><i>Valve<em>4</em></i><i>Schedule</i><i>Valve, T-Type</i><i>Standard</i><i>$0.00</i><i>$0.00</i><i></i></div>
              <div class="tr"><i></i><i>0</i><i>Generic</i><i></i><i>1600'-11½ (187 Pcs)</i><i>0</i><i></i><i>Valve<em>1½</em></i><i>Schedule</i><i>Valve, G-Style</i><i>Butterfly</i><i>$0.00</i><i>$0.00</i><i></i></div>
              <div class="tr"><i></i><i>0</i><i>Generic</i><i></i><i>61'-8½ (37 Pcs)</i><i>0</i><i></i><i>Valve<em>2</em></i><i>Schedule</i><i>Valve, G-Style</i><i>Standard</i><i>$0.00</i><i>$0.00</i><i></i></div>
              <div class="tr"><i></i><i>0</i><i>Generic</i><i></i><i>8'-5 (5 Pcs)</i><i>0</i><i></i><i>Hanger<em>4</em></i><i>Schedule</i><i>Hanger Ring</i><i>Standard (Hanger Component Material)</i><i>$0.00</i><i>$0.00</i><i></i></div>
              <div class="tr"><i>Plug, CI</i><i>0</i><i>Generic</i><i></i><i>1</i><i>0</i><i></i><i>Hanger<em>2</em></i><i>Caps</i><i>All Thread Rod, Galvanized (Hanger Component Material)</i><i>Carbon</i><i>$0.00</i><i>$0.00</i><i></i></div>
              <div class="tr"><i>g</i><i>0</i><i>Generic</i><i></i><i>1</i><i>0</i><i></i><i>Hanger<em>4</em></i><i>Caps</i><i>Wide Mouth Beam Clamp, Pin (Hanger Component Material)</i><i>Standard</i><i>$0.00</i><i>$0.00</i><i></i></div>
              <div class="tr"><i>g</i><i>0</i><i>Generic</i><i></i><i>1</i><i>0</i><i></i><i>Hardware<em></em></i><i>Cap</i><i>Flat Washer, Cup (Hanger Component Material)</i><i>Cup</i><i>$0.00</i><i>$0.00</i><i></i></div>
              <div class="tr"><i>g</i><i>0</i><i>Generic</i><i></i><i>1</i><i>0</i><i></i><i>Hardware<em></em></i><i>Cap</i><i>Standard</i><i>Hex Nut, Galv (Hanger Component Material)</i><i>$0.00</i><i>$0.00</i><i></i></div>
              <div class="tr"><i>g</i><i>0</i><i>Generic</i><i></i><i>1</i><i>0</i><i></i><i>Test &amp; Drain</i><i>Cap</i><i>Water Gauge</i><i>Cast Iron</i><i>$0.00</i><i>$0.00</i><i></i></div>
              <div class="tr"><i>&nbsp;E Gasket</i><i>0</i><i>Generic</i><i></i><i>27</i><i>0</i><i></i><i class="rt">1½</i><i>Rigid Coupling</i><i></i><i>Standard</i><i>$0.00</i><i>$0.00</i><i></i></div>
              <div class="tr"><i>&nbsp;E Gasket</i><i>0</i><i>Generic</i><i></i><i>5</i><i>0</i><i></i><i class="rt">2</i><i>Rigid Coupling</i><i></i><i>Standard</i><i>$0.00</i><i>$0.00</i><i></i></div>
              <div class="tr"><i>&nbsp;E Gasket</i><i>0</i><i>Generic</i><i></i><i>12</i><i>0</i><i></i><i class="rt">2½</i><i>Rigid Coupling</i><i></i><i>Standard</i><i>$0.00</i><i>$0.00</i><i></i></div>
              <div class="tr"><i>&nbsp;E Gasket</i><i>0</i><i>Generic</i><i></i><i>5</i><i>0</i><i></i><i class="rt">3</i><i>Rigid Coupling</i><i></i><i>Standard</i><i>$0.00</i><i>$0.00</i><i></i></div>
              <div class="tr"><i>&nbsp;E Gasket</i><i>0</i><i>Generic</i><i></i><i>13</i><i>0</i><i></i><i class="rt">4</i><i>Rigid Coupling</i><i></i><i>Standard</i><i>$0.00</i><i>$0.00</i><i></i></div>
              <div class="tr"><i>ucing, Org, E Gasket</i><i>0</i><i>Generic</i><i></i><i>6</i><i>0</i><i></i><i class="rt">2 x 1½</i><i>Rigid Coupling</i><i></i><i>Standard</i><i>$0.00</i><i>$0.00</i><i></i></div>
              <div class="tr"><i>ucing, Org, E Gasket</i><i>0</i><i>Generic</i><i></i><i>1</i><i>0</i><i></i><i class="rt">2½ x 2</i><i>Rigid Coupling</i><i></i><i>Standard</i><i>$0.00</i><i>$0.00</i><i></i></div>
              <div class="tr"><i>ucing, Org, E Gasket</i><i>0</i><i>Generic</i><i></i><i>1</i><i>0</i><i></i><i class="rt">3 x 2</i><i>Rigid Coupling</i><i></i><i>Standard</i><i>$0.00</i><i>$0.00</i><i></i></div>
              <div class="tr"><i>ucing, Org, E Gasket</i><i>0</i><i>Generic</i><i></i><i>1</i><i>0</i><i></i><i class="rt">4 x 3</i><i>Rigid Coupling</i><i></i><i>Standard</i><i>$0.00</i><i>$0.00</i><i></i></div>
              <div class="tr"><i>, CI</i><i>0</i><i>Generic</i><i></i><i>1</i><i>0</i><i></i><i class="rt">2</i><i>Elbow</i><i></i><i>Cast Iron</i><i>$0.00</i><i>$0.00</i><i></i></div>
              <div class="tr"><i>, CI</i><i>0</i><i>Generic</i><i></i><i>1</i><i>0</i><i></i><i class="rt">2</i><i>Elbow</i><i></i><i>Cast Iron</i><i>$0.00</i><i>$0.00</i><i></i></div>
              <div class="tr"><i>sing Elbow, CI</i><i>0</i><i>Generic</i><i></i><i>34</i><i>0</i><i></i><i class="rt">1½ x 1½</i><i>Elbow</i><i></i><i>Cast Iron</i><i>$0.00</i><i>$0.00</i><i></i></div>
              <b class="vline v1"></b>
              <b class="vline v2"></b>
            </div>
          </div>
          <div class="vbar"><i></i></div>
        </div>
        <div class="hbar2"><i></i></div>
        <div class="sheetbar">
          <span class="sbtn">|◀</span><span class="sbtn">◀</span><span class="sbtn">▶</span><span class="sbtn">▶|</span>
          <span class="stab on">*Model</span><span class="stab">Sheet 1</span>
        </div>
      </div>
    </section>

    <aside class="sidebar">
      <div class="vtb vg1">
        <i class="vgrip"></i>
        <span class="vtxt">Import DWG</span>
        <b class="vbtn tall"><svg class="ico"><use href="#impt"/></svg></b>
        <b class="vbtn tall"><svg class="ico"><use href="#pgpink"/></svg></b>
        <b class="vbtn tall"><svg class="ico"><use href="#chain"/></svg></b>
      </div>
      <div class="vchev"><svg><use href="#chevside"/></svg></div>
      <div class="vtb vg2">
        <i class="vgrip"></i>
        <b class="vbtn"><svg class="ico"><use href="#v1"/></svg></b>
        <b class="vbtn"><svg class="ico"><use href="#v2"/></svg></b>
        <i class="vsep"></i>
        <b class="vbtn"><svg class="ico"><use href="#v3"/></svg></b>
        <b class="vbtn"><svg class="ico"><use href="#v4"/></svg></b>
        <b class="vbtn"><svg class="ico"><use href="#v5"/></svg></b>
        <i class="vsep"></i>
        <b class="vbtn"><svg class="ico"><use href="#v6"/></svg></b>
        <b class="vbtn"><svg class="ico"><use href="#v7"/></svg></b>
        <b class="vbtn"><svg class="ico"><use href="#v8"/></svg></b>
      </div>
      <div class="vchev"><svg><use href="#chevside"/></svg></div>
      <div class="vtb vg3">
        <i class="vgrip"></i>
        <span class="vtxt short">GLSL</span>
        <span class="vorange">OpenGL®</span>
        <b class="vactive"><svg class="ico"><use href="#back"/></svg></b>
      </div>
    </aside>
  </main>

  <footer class="statusbar">
    <span class="smsg">Restores the previous camera position.</span>
    <span class="scell">1244 selected</span>
    <span class="scell">Angle:0</span>
    <span class="scell">A:13</span>
  </footer>

  <div class="tbrow bottom">
    <div class="tb w619">
      <i class="grip"></i>
      <b class="btn"><svg class="ico"><use href="#winlk"/></svg></b>
      <a class="obtn o39">Layers</a><a class="obtn o66">Parts Picker</a><a class="obtn o36">Alerts</a><a class="obtn o39">Select</a><a class="obtn o49">Symbols</a>
      <b class="btn blue"><svg class="ico r270"><use href="#arrow"/></svg></b>
      <b class="btn blue"><svg class="ico"><use href="#arrow"/></svg></b>
      <b class="btn blue"><svg class="ico r90"><use href="#arrow"/></svg></b>
      <b class="btn blue"><svg class="ico r180"><use href="#arrow"/></svg></b>
      <b class="btn blue"><svg class="ico"><use href="#undo"/></svg></b>
      <b class="btn blue"><svg class="ico flip"><use href="#undo"/></svg></b>
      <b class="btn"><svg class="ico"><use href="#fit"/></svg></b>
      <span class="chev"><svg><use href="#chev"/></svg></span>
    </div>
    <div class="tb w185">
      <i class="grip"></i>
      <b class="btn"><svg class="ico"><use href="#math"/></svg></b>
      <b class="btn mini"><svg class="ico"><use href="#bigarrow"/></svg></b>
      <span class="numbox">80</span>
      <span class="chev"><svg><use href="#chev"/></svg></span>
    </div>
    <div class="tb w1082">
      <i class="grip"></i>
      <b class="btn"><svg class="ico"><use href="#cam"/></svg></b>
      <b class="btn"><svg class="ico"><use href="#dots"/></svg></b>
      <b class="btn"><svg class="ico"><use href="#checks"/></svg></b>
      <b class="btn"><svg class="ico"><use href="#ystar"/></svg></b>
      <b class="btn"><svg class="ico"><use href="#frame"/></svg></b>
      <a class="obtn o85">Lock On Target</a>
      <b class="btn"><svg class="ico"><use href="#goup"/></svg></b>
      <b class="btn"><svg class="ico"><use href="#godn"/></svg></b>
      <b class="btn mag"><svg class="ico"><use href="#arrow"/></svg></b>
      <b class="btn mag"><svg class="ico r270"><use href="#arrow"/></svg></b>
      <b class="btn mag"><svg class="ico"><use href="#undo"/></svg></b>
      <b class="btn mag"><svg class="ico r180"><use href="#arrow"/></svg></b>
      <b class="btn mag"><svg class="ico r90"><use href="#arrow"/></svg></b>
      <b class="btn mag"><svg class="ico flip"><use href="#undo"/></svg></b>
      <b class="btn"><svg class="ico"><use href="#spin"/></svg></b>
      <b class="btn"><svg class="ico flip"><use href="#spin"/></svg></b>
      <b class="btn"><svg class="ico"><use href="#house"/></svg></b>
      <b class="btn"><svg class="ico"><use href="#barn"/></svg></b>
      <b class="btn"><svg class="ico"><use href="#house"/></svg></b>
      <b class="btn"><svg class="ico"><use href="#panel2"/></svg></b>
      <b class="btn"><svg class="ico"><use href="#twin"/></svg></b>
      <b class="btn"><svg class="ico"><use href="#bars"/></svg></b>
      <a class="obtn o43"><svg class="ico"><use href="#disk2"/></svg></a>
      <span class="chev"><svg><use href="#chev"/></svg></span>
    </div>
  </div>

  <div class="tooltip">
    <svg class="tipicon" viewBox="0 0 32 32"><use href="#back"/></svg>
    <strong>Previous Camera Position (Ctrl+F7)</strong>
    <span>Restores the previous camera position.</span>
  </div>
</body>
</html>
```

FILE: styles.css
```css
* {
  box-sizing: border-box;
  margin: 0;
  padding: 0;
}

html, body {
  width: 1920px;
  height: 1032px;
  overflow: hidden;
}

body {
  background: #555;
  color: #222;
  font-family: "Noto Sans", "Open Sans", sans-serif;
  font-size: 11px;
  display: flex;
  flex-direction: column;
  position: relative;
}

.sprite {
  display: none;
}

i, em, b, u {
  font-style: normal;
  font-weight: normal;
  text-decoration: none;
}

/* title and menu */

.titlebar {
  height: 23px;
  flex: none;
  background: #f2f2f2;
  color: #8b8b8b;
  display: flex;
  align-items: center;
  font-size: 12px;
  padding-left: 3px;
}

.appicon {
  width: 16px;
  height: 17px;
  margin-right: 5px;
}

.apptitle {
  white-space: nowrap;
  letter-spacing: -0.12px;
}

.winbtns {
  margin-left: auto;
  display: flex;
  align-items: center;
  padding-right: 20px;
}

.wdash {
  width: 10px;
  border-top: 1px solid #999;
}

.wrest {
  width: 9px;
  height: 10px;
  border: 1px solid #999;
  margin-left: 35px;
}

.wclose {
  width: 10px;
  height: 10px;
  margin-left: 37px;
}

.menubar {
  height: 23px;
  flex: none;
  background: #555;
  color: #f0f0f0;
  display: flex;
  align-items: center;
  padding-left: 3px;
}

.docicon {
  width: 16px;
  height: 16px;
  margin-right: 3px;
}

.menubar a {
  padding: 0 7.5px;
  white-space: nowrap;
}

.mdi {
  margin-left: auto;
  display: flex;
  align-items: center;
  padding: 8px 5px 0 0;
}

.mdash {
  width: 7px;
  height: 2px;
  background: #ccc;
  margin-top: 7px;
}

.mrest {
  width: 9px;
  height: 8px;
  border: 1px solid #ddd;
  border-top-width: 2px;
  margin-left: 9px;
}

.mclose {
  width: 10px;
  height: 10px;
  margin-left: 7px;
}

/* toolbars */

.tbrow {
  display: flex;
  height: 45.67px;
  flex: none;
  padding-bottom: 1px;
}

.tb {
  height: 100%;
  flex: none;
  display: flex;
  align-items: center;
  position: relative;
  border-radius: 4px;
  background: linear-gradient(#c8ccd1, #c4c7cc 55%, #9a9ea6);
  overflow: hidden;
  white-space: nowrap;
}

.w594 { width: 594px; }
.w1312 { width: 1312px; }
.w1867 { width: 1867px; }
.w571 { width: 571px; }
.w462 { width: 462px; }
.w385 { width: 385px; }
.w435 { width: 435px; }
.w619 { width: 619px; }
.w185 { width: 185px; }
.w1082 { width: 1082px; }

.grip {
  width: 2px;
  height: 28px;
  margin: 0 4px 0 4px;
  border-left: 2px dotted #333;
  flex: none;
}

.btn {
  width: 44px;
  height: 100%;
  flex: none;
  display: flex;
  align-items: center;
  justify-content: center;
}

.btn.mini {
  width: 41px;
}

.ico {
  width: 32px;
  height: 32px;
  fill: none;
  stroke: #000;
  stroke-width: 2;
  filter: drop-shadow(2px 2px 0 rgba(60, 60, 60, 0.35));
  flex: none;
}

.ico.plain {
  filter: none;
}

symbol text {
  stroke: none;
  fill: #000;
  font-family: "DejaVu Sans", sans-serif;
  font-weight: bold;
}

.num { font-size: 16px; }

symbol .abc {
  font-family: "Liberation Mono", monospace;
  font-size: 16px;
}

symbol .biga {
  font-family: "Liberation Serif", serif;
  font-size: 34px;
}

symbol .lbe {
  font-size: 20px;
  fill: #fff;
}

.blue { color: #00f; }
.mag { color: #a000a8; }
.green { color: #0c0; }
.yellow { color: #ee0; }

.r90 { transform: rotate(90deg); }
.r180 { transform: rotate(180deg); }
.r270 { transform: rotate(270deg); }
.flip { transform: scaleX(-1); }

.lbl {
  padding: 0 4px;
  flex: none;
  color: #222;
}

.snug {
  letter-spacing: -0.2px;
}

.dis {
  color: #9b9b9b;
}

.chev {
  position: absolute;
  right: 0;
  top: 0;
  bottom: 0;
  width: 19px;
  background: linear-gradient(#a9adb3, #4f555e);
  display: flex;
  align-items: flex-end;
  justify-content: center;
  padding-bottom: 3px;
}

.chev svg {
  width: 14px;
  height: 14px;
}

.obtn {
  height: 41px;
  flex: none;
  display: flex;
  align-items: center;
  justify-content: center;
  margin-left: 1px;
  border-radius: 2px;
  background: linear-gradient(#fee2b8, #fdbf73 30%, #fcb25c 70%, #fdc878 90%, #ffeeb0);
  box-shadow: inset 0 0 0 1px rgba(255, 255, 255, 0.35);
  color: #333;
}

.o39 { width: 38px; }
.o66 { width: 66px; }
.o36 { width: 36px; }
.o49 { width: 49px; }
.o85 { width: 85px; }
.o43 { width: 43px; }

.numbox {
  width: 60px;
  height: 15px;
  margin-left: 7px;
  background: #fff;
  color: #222;
  line-height: 15px;
}

/* workspace */

.workspace {
  height: 783px;
  flex: none;
  display: flex;
  gap: 4px;
  margin-top: 0.33px;
}

.panel {
  flex: none;
  height: 100%;
  display: flex;
  flex-direction: column;
  background: #fff;
  overflow: hidden;
}

.layers { width: 221px; background: #f0f0f0; }
.alerts { width: 197px; }
.symbols { width: 192px; }
.select { width: 169px; }
.parts { width: 276px; background: #1b2238; }

.ptitle {
  height: 20px;
  flex: none;
  background: #9e9f9e;
  color: #585858;
  display: flex;
  align-items: center;
  padding: 0 6px 0 4px;
}

.ptitle span {
  flex: 1;
}

.pin {
  width: 10px;
  height: 12px;
  margin-right: 9px;
}

.pclose {
  width: 10px;
  height: 10px;
}

.ptools {
  flex: none;
  height: 46px;
  background: linear-gradient(#d4d6da, #c4c7cb 50%, #9ea1a6);
  display: flex;
  align-items: center;
  overflow: hidden;
}

.layertools {
  margin: 0 3px;
  padding-left: 7px;
  gap: 13px;
}

.tsep {
  width: 2px;
  height: 26px;
  flex: none;
  background: #f4f4f4;
  margin: 0 -3px;
}

.alerttools {
  height: 44px;
  padding-left: 9px;
  gap: 12px;
}

.selecttools {
  height: 44px;
  padding-left: 7px;
  gap: 12px;
}

.thead {
  flex: none;
  height: 20px;
  display: grid;
  background: linear-gradient(#fafafa, #ebebeb);
  border-bottom: 1px solid #bbb;
}

.thead span {
  padding-left: 4px;
  line-height: 21px;
  border-right: 1px solid #c4c4c4;
  white-space: nowrap;
  overflow: hidden;
}

.lcols {
  display: grid;
  grid-template-columns: 99px 20px 20px 20px 20px 1fr;
}

.acols { grid-template-columns: 84px 42px 28px 1fr; }
.scols { display: grid; grid-template-columns: 99px 50px 1fr; }
.ecols { grid-template-columns: 133px 1fr; }

.layers .thead {
  margin: 0 3px;
}

.tree {
  flex: 1;
  background: #fff;
  margin: 0 3px;
  padding-top: 1px;
}

.lrow {
  height: 17px;
  align-items: center;
  position: relative;
  white-space: nowrap;
}

.lrow svg {
  justify-self: center;
}

.lrow svg:first-of-type {
  margin-left: -3px;
}

.l1 > span:first-child { padding-left: 17px; }
.l2 > span:first-child { padding-left: 32px; }

.l1::before,
.l2::before {
  content: "";
  position: absolute;
  height: 17px;
  top: -8px;
  border-left: 1px dotted #999;
  border-bottom: 1px dotted #999;
}

.l1::before { left: 8px; width: 7px; }
.l2::before { left: 23px; width: 7px; }

.open::after,
.closed::after {
  content: "–";
  position: absolute;
  left: 4px;
  top: 4px;
  width: 9px;
  height: 9px;
  background: #fff;
  border: 1px solid #888;
  font-size: 8px;
  line-height: 7px;
  text-align: center;
}

.closed::after {
  content: "+";
}

.sel {
  background: linear-gradient(90deg, transparent 30px, #0a78d7 30px);
}

.sel > span {
  color: #fff;
}

.sw {
  width: 18px;
  height: 14px;
  background: #000;
  border: 1px solid #888;
  justify-self: center;
}

.sw.red { background: #f00; border-color: #fff; }
.sw.blue { background: #00f; }

.lcols > span:last-child {
  padding-left: 4px;
}

.hbar {
  height: 18px;
  flex: none;
  background: #efefef;
  display: flex;
  align-items: center;
  justify-content: center;
}

.hbar i {
  width: 76%;
  border-top: 2px solid #9a9a9a;
}

.ltabs {
  height: 24px;
  flex: none;
  background: #555;
  color: #eee;
  display: flex;
  align-items: center;
  padding-left: 5px;
}

.ltabs span {
  width: 30px;
  padding-left: 3px;
}

.ltabs .on {
  width: 26px;
  height: 21px;
  margin-right: 7px;
  background: linear-gradient(#eee, #cfd6dc);
  color: #222;
  line-height: 20px;
  border-radius: 0 0 5px 5px;
}

.whitefill {
  flex: 1;
  background: #fff;
}

.symlist {
  padding-top: 1px;
}

.whitefoot {
  height: 143px;
  flex: none;
  background: #fff;
}

.thead.scols {
  height: 18px;
}

.thead.scols span {
  line-height: 19px;
}

.srow {
  height: 17px;
  align-items: center;
  white-space: nowrap;
}

.srow span:first-child {
  display: flex;
  align-items: center;
  gap: 3px;
}

.srow span + span {
  padding-left: 5px;
}

.s16 {
  width: 16px;
  height: 16px;
}

.preview {
  width: 192px;
  height: 95px;
  flex: none;
  fill: none;
  stroke: #000;
  stroke-width: 2;
}

/* parts picker */

.partsbody {
  flex: 1;
  padding-top: 12px;
  font-family: "Open Sans", "Noto Sans", sans-serif;
}

.prow {
  display: flex;
  align-items: center;
  margin: 0 0 8px 14px;
}

.pbtn {
  height: 32px;
  background: #0b8aea;
  color: #fff;
  font-weight: 600;
  font-size: 22.500px;
  line-height: 31px;
  text-align: center;
  border-radius: 3px;
}

.dl { width: 127px; }
.pf { width: 100px; }

.sp {
  width: 98px;
  font-size: 18.500px;
}

.dsep {
  width: 5px;
  height: 31px;
  border-left: 1px solid #3c4458;
  border-right: 1px solid #3c4458;
}

.s1 { margin-left: 21px; }
.s2 { margin: 0 28px 0 21px; }

.pnav {
  display: flex;
  flex-wrap: wrap;
  margin-left: 8px;
  width: 257px;
  color: #a8b5cf;
  font-weight: 600;
  font-size: 13px;
  line-height: 19px;
}

.pnav a {
  padding: 10px 12px;
  white-space: nowrap;
}

.pnav a.r1 {
  padding: 9.500px 12px;
}

.pnav .new {
  color: #fff;
}

.pnav .on {
  color: #fff;
  background: #01020a;
  border: 1px solid #2a3044;
  border-bottom: 0;
  padding: 8px 11px 11px;
  height: 38px;
  border-radius: 3px 3px 0 0;
}

.pnav .wide {
  padding: 8px 12px 7px;
  line-height: 20px;
}

.filterbox {
  margin-left: 9px;
  width: 256px;
  height: 411px;
  background: #01020a;
  display: flex;
}

.fcol {
  width: 210px;
  flex: none;
  padding: 10px 0 0 10px;
  color: #fff;
}

.fhead {
  width: 190px;
  height: 19px;
  display: flex;
  align-items: center;
  justify-content: space-between;
  font-size: 14px;
}

.reset {
  width: 45px;
  height: 19px;
  background: #0b8aea;
  border-radius: 3px;
  font-weight: 700;
  font-size: 13px;
  line-height: 18px;
  text-align: center;
}

.fsearch {
  width: 190px;
  height: 31px;
  margin-top: 15px;
  padding-left: 11px;
  background: #fff;
  border-radius: 3px;
  color: #b3b3b3;
  font-size: 15px;
  line-height: 30px;
}

.fscroll {
  width: 200px;
  height: 261px;
  margin-top: 10px;
  border-top: 1px solid #2a3355;
  border-bottom: 1px solid #2a3355;
  display: flex;
  overflow: hidden;
}

.flist {
  width: 183px;
  flex: none;
}

.fsec {
  height: 35px;
  padding: 8px 10px 0 0;
  display: flex;
  justify-content: space-between;
  color: #628cc9;
  font-size: 10px;
  font-weight: 700;
  letter-spacing: 1px;
  line-height: 16px;
}

.fsec.mfr {
  height: 29px;
}

.fsec em {
  color: #8a8f99;
  font-size: 12px;
  line-height: 12px;
  letter-spacing: 0;
}

.fchk {
  height: 26px;
  display: flex;
  align-items: center;
  padding-top: 3px;
  font-size: 13px;
  white-space: nowrap;
}

.cb {
  width: 13px;
  height: 13px;
  flex: none;
  display: block;
  background: #fff;
  border: 1px solid #aaa;
  margin-right: 8px;
}

.fchk .cb {
  margin-top: -4px;
}

.cb svg {
  display: block;
  width: 11px;
  height: 11px;
}

.fchk u {
  margin-left: 5px;
  padding: 0 5px;
  height: 12px;
  border-radius: 6px;
  background: #1f567f;
  font-size: 10px;
  font-weight: 700;
  line-height: 12px;
}

.fchk.link {
  color: #1a82e2;
  margin-top: 0;
}

.fscroll + .fchk {
  margin-top: 3px;
}

.fbar {
  width: 17px;
  height: 100%;
  background: #f0f0f0;
  display: flex;
  flex-direction: column;
  align-items: center;
  position: relative;
}

.fbar svg {
  width: 14px;
  height: 10px;
  margin-top: 17px;
}

.fbar i {
  display: block;
  width: 15px;
  height: 100px;
  margin-top: 7px;
  background: #c8c8c8;
}

.fbar .down {
  margin-top: 98px;
}

.fside {
  width: 36px;
  height: 393px;
  flex: none;
  margin-top: 10px;
  background: #1a2340;
  border-radius: 4px 0 0 4px;
}

.sbox {
  display: block;
  width: 10px;
  height: 31px;
  margin: 11px 0 0 26px;
  background: #fff;
  border-radius: 3px 0 0 3px;
}

.sband {
  height: 72px;
  margin: 75px 0 0 11px;
  padding: 38px 0 0 5px;
  background: #222c4c;
  border-bottom: 2px solid #2f3b66;
}

.sband i {
  display: block;
  height: 24px;
  background: linear-gradient(#555, #222);
  border: 3px solid #e6e4cf;
  border-right: 0;
}

.scb {
  margin: 27px 0 0 22px;
}

.scb.far {
  margin-top: 53px;
}

/* drawing */

.docwrap {
  width: 796px;
  flex: none;
  height: 100%;
  display: flex;
  flex-direction: column;
}

.doctabs {
  height: 20px;
  flex: none;
  display: flex;
  align-items: flex-end;
  color: #f2f2f2;
  padding-left: 7px;
  position: relative;
}

.dtab {
  width: 62px;
  line-height: 18px;
  white-space: nowrap;
}

.dtab.on {
  width: 160px;
  height: 18px;
  padding-left: 3px;
  background: #f0f0f0;
  color: #111;
  display: flex;
  align-items: center;
}

.dtab svg {
  width: 10px;
  height: 10px;
  margin-left: auto;
  margin-right: 5px;
}

.docplay {
  width: 10px;
  height: 10px;
  margin: 0 5px 4px auto;
}

.docbody {
  height: 758px;
  flex: none;
  display: flex;
  flex-direction: column;
  background: #eee;
  border-left: 4px solid #8a8a8a;
  border-top: 4px solid #f0f0f0;
}

.docmain {
  height: 717px;
  flex: none;
  display: flex;
}

.canvas {
  width: 767px;
  flex: none;
  margin-left: 2px;
  background: #fff;
  position: relative;
  overflow: hidden;
  border-top: 1px solid #888;
}

.axis {
  position: absolute;
  left: 0;
  top: -1px;
  width: 767px;
  height: 717px;
  z-index: 2;
}

.axline {
  fill: none;
  stroke: #5a62ff;
  stroke-width: 1.500;
}

.sheet {
  margin-top: 358px;
  position: relative;
  color: #f00;
  font-family: "Liberation Sans", Arial, sans-serif;
  font-size: 8.500px;
  letter-spacing: 0.15px;
  -webkit-text-stroke: 0.2px #f00;
}

.stitle {
  height: 20px;
  border-top: 1px solid #f00;
  padding-left: 206px;
  font-size: 11.500px;
  font-weight: bold;
  line-height: 21px;
  letter-spacing: 0;
}

.tr {
  height: 12.470px;
  display: grid;
  grid-template-columns: 95px 61px 71px 66px 86px 63px 25px 29px 31px 41px 51px 54px 50px 44px;
  border-bottom: 1px solid #f00;
  line-height: 13px;
  white-space: nowrap;
}

.tr i {
  position: relative;
  padding-left: 2px;
  border-right: 2px solid #ff8c8c;
}

.tr i:nth-child(2),
.tr i:nth-child(5),
.tr i:nth-child(6),
.tr i:nth-child(12),
.tr i:nth-child(13),
.tr .rt {
  text-align: right;
  padding-right: 2px;
}

.tr i:nth-child(5) {
  border-right-color: #f00;
}

.tr i:last-child,
.tr i:nth-child(12),
.tr i:nth-child(13) {
  border-right-color: #f00;
}

.tr i:last-child {
  border-right: 0;
}

.tr em {
  position: absolute;
  right: 2px;
  top: 0;
}

.tr em.ovl {
  left: 8px;
  right: auto;
}

.th {
  height: 15px;
  border-top: 1px solid #f00;
  font-size: 10px;
  font-weight: bold;
  line-height: 15px;
  letter-spacing: 0.2px;
}

.th i:nth-child(n) {
  padding: 0 0 0 4px;
  text-align: left;
}

.th i:nth-child(5) {
  padding: 0;
  text-align: center;
}

.vline {
  position: absolute;
  top: 0;
  width: 1px;
  background: #f00;
}

.v1 { left: 383px; height: 209px; }
.v2 { left: 723px; height: 359px; }

.vbar {
  flex: 1;
  position: relative;
}

.vbar i {
  display: block;
  width: 2px;
  height: 17px;
  margin: 20px 0 0 7px;
  background: #999;
}

.hbar2 {
  height: 17px;
  flex: none;
  display: flex;
  align-items: center;
  padding-left: 524px;
}

.hbar2 i {
  width: 16px;
  border-top: 2px solid #999;
}

.sheetbar {
  height: 18px;
  flex: none;
  margin: 0 0 0 2px;
  background: #787878;
  display: flex;
  align-items: center;
  padding-left: 1px;
  gap: 3px;
}

.sbtn {
  width: 13px;
  height: 13px;
  background: #ddd;
  color: #444;
  font-size: 7px;
  line-height: 13px;
  text-align: center;
}

.stab {
  width: 58px;
  height: 17px;
  padding-left: 9px;
  margin-left: -6px;
  background: #c5ccd6;
  font-size: 11px;
  line-height: 16px;
  clip-path: polygon(8px 0, 100% 0, calc(100% - 8px) 100%, 0 100%);
}

.stab.on {
  width: 54px;
  margin-left: 2px;
  padding-left: 6px;
  background: #f3f3f3;
  font-weight: 600;
  color: #000;
  clip-path: polygon(0 0, 100% 0, calc(100% - 6px) 100%, 0 100%);
}

/* right side toolbars */

.sidebar {
  flex: 1;
  margin-left: -2px;
  display: flex;
  flex-direction: column;
  overflow: hidden;
}

.vtb {
  background: linear-gradient(90deg, #c8ccd2, #c2c5ca 55%, #999da5);
  display: flex;
  flex-direction: column;
  align-items: center;
  flex: none;
  border-radius: 3px;
}

.vg1 { height: 211px; }
.vg2 { height: 363px; }
.vg3 { height: 156px; }

.vgrip {
  width: 26px;
  height: 2px;
  margin: 4px 0 2px;
  border-top: 2px dotted #333;
  flex: none;
}

.vtxt {
  height: 70px;
  width: 48px;
  flex: none;
  writing-mode: vertical-rl;
  text-align: center;
  white-space: nowrap;
  font-size: 11px;
  line-height: 48px;
}

.vtxt.short {
  height: 37px;
}

.vbtn {
  width: 100%;
  height: 39px;
  flex: none;
  display: flex;
  align-items: center;
  justify-content: center;
}

.vbtn.tall {
  height: 42px;
}

.vsep {
  width: 28px;
  height: 1px;
  flex: none;
  background: #f4f4f4;
  margin: 8px 0;
}

.vchev {
  height: 22px;
  flex: none;
  background: linear-gradient(90deg, #4f555e, #a9adb3);
  display: flex;
  align-items: center;
  justify-content: flex-end;
  padding-right: 2px;
}

.vchev svg {
  width: 20px;
  height: 12px;
}

.vorange {
  width: 43px;
  height: 63px;
  flex: none;
  writing-mode: vertical-rl;
  text-align: center;
  line-height: 43px;
  border-radius: 2px;
  background: linear-gradient(90deg, #fee2b8, #fcb25c 50%, #ffeeb0);
  color: #333;
  font-size: 11px;
}

.vactive {
  width: 43px;
  height: 39px;
  flex: none;
  margin-top: 3px;
  display: flex;
  align-items: center;
  justify-content: center;
  border-radius: 2px;
  background: linear-gradient(#fff3cc, #fcc45c 50%, #ffeeb0);
}

/* status bar and tooltip */

.statusbar {
  height: 19px;
  flex: none;
  display: flex;
  align-items: flex-end;
  padding: 0 0 2px 4px;
  background: linear-gradient(#4d545c 0, #454a50 40%, #2f2f2f 42%, #2f2f2f 100%);
  color: #eee;
  white-space: nowrap;
}

.smsg {
  width: 1530px;
}

.scell {
  padding: 0 5px;
  border-left: 1px solid #888;
}

.bottom {
  padding: 0;
  height: 46px;
}

.tooltip {
  position: absolute;
  left: 1686px;
  top: 963px;
  width: 234px;
  height: 43px;
  padding: 3px 0 0 28px;
  background: #f3f3f3;
  border: 1px solid #aaa;
  box-shadow: 2px 2px 3px rgba(0, 0, 0, 0.4);
  color: #666;
  display: flex;
  flex-direction: column;
  gap: 4px;
  white-space: nowrap;
  z-index: 5;
}

.tooltip strong {
  font-weight: 600;
  color: #444;
}

.tipicon {
  position: absolute;
  left: 6px;
  top: 2px;
  width: 18px;
  height: 18px;
  fill: none;
  stroke: #000;
}
```
